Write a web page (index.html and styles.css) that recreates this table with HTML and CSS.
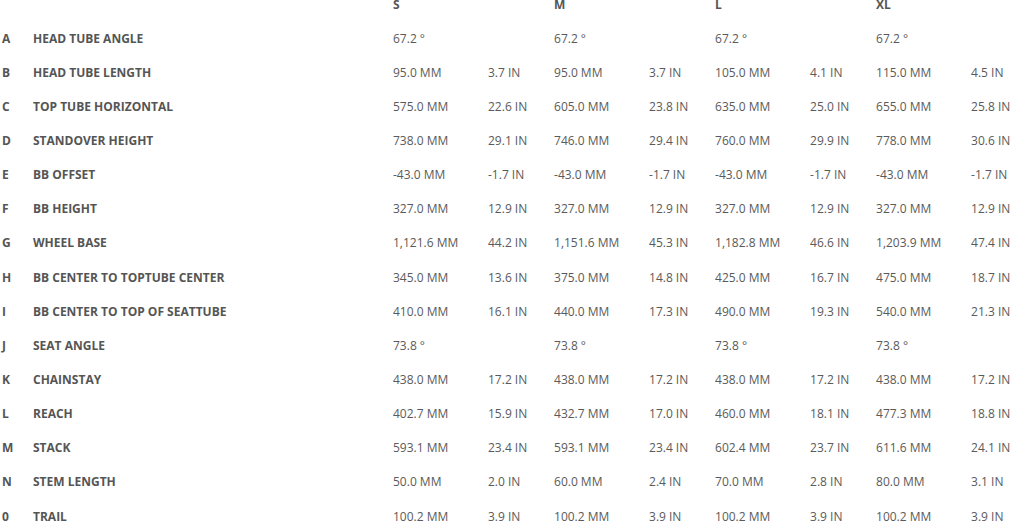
FILE: index.html
```html
<!DOCTYPE html>
<html>
<head>
<meta charset="utf-8">
<link rel="stylesheet" href="styles.css">
</head>
<body>
<table class="geo">
<colgroup>
<col class="c-letter"><col class="c-name">
<col class="c-mm"><col class="c-in">
<col class="c-mm"><col class="c-in">
<col class="c-mm"><col class="c-in">
<col class="c-mm"><col class="c-in">
</colgroup>
<thead>
<tr class="head"><th></th><th></th><th colspan="2">S</th><th colspan="2">M</th><th colspan="2">L</th><th colspan="2">XL</th></tr>
</thead>
<tbody>
<tr><th>A</th><th>HEAD TUBE ANGLE</th><td>67.2 °</td><td></td><td>67.2 °</td><td></td><td>67.2 °</td><td></td><td>67.2 °</td><td></td></tr>
<tr><th>B</th><th>HEAD TUBE LENGTH</th><td>95.0 MM</td><td>3.7 IN</td><td>95.0 MM</td><td>3.7 IN</td><td>105.0 MM</td><td>4.1 IN</td><td>115.0 MM</td><td>4.5 IN</td></tr>
<tr><th>C</th><th>TOP TUBE HORIZONTAL</th><td>575.0 MM</td><td>22.6 IN</td><td>605.0 MM</td><td>23.8 IN</td><td>635.0 MM</td><td>25.0 IN</td><td>655.0 MM</td><td>25.8 IN</td></tr>
<tr><th>D</th><th>STANDOVER HEIGHT</th><td>738.0 MM</td><td>29.1 IN</td><td>746.0 MM</td><td>29.4 IN</td><td>760.0 MM</td><td>29.9 IN</td><td>778.0 MM</td><td>30.6 IN</td></tr>
<tr><th>E</th><th>BB OFFSET</th><td>-43.0 MM</td><td>-1.7 IN</td><td>-43.0 MM</td><td>-1.7 IN</td><td>-43.0 MM</td><td>-1.7 IN</td><td>-43.0 MM</td><td>-1.7 IN</td></tr>
<tr><th>F</th><th>BB HEIGHT</th><td>327.0 MM</td><td>12.9 IN</td><td>327.0 MM</td><td>12.9 IN</td><td>327.0 MM</td><td>12.9 IN</td><td>327.0 MM</td><td>12.9 IN</td></tr>
<tr><th>G</th><th>WHEEL BASE</th><td>1,121.6 MM</td><td>44.2 IN</td><td>1,151.6 MM</td><td>45.3 IN</td><td>1,182.8 MM</td><td>46.6 IN</td><td>1,203.9 MM</td><td>47.4 IN</td></tr>
<tr><th>H</th><th>BB CENTER TO TOPTUBE CENTER</th><td>345.0 MM</td><td>13.6 IN</td><td>375.0 MM</td><td>14.8 IN</td><td>425.0 MM</td><td>16.7 IN</td><td>475.0 MM</td><td>18.7 IN</td></tr>
<tr><th>I</th><th>BB CENTER TO TOP OF SEATTUBE</th><td>410.0 MM</td><td>16.1 IN</td><td>440.0 MM</td><td>17.3 IN</td><td>490.0 MM</td><td>19.3 IN</td><td>540.0 MM</td><td>21.3 IN</td></tr>
<tr><th>J</th><th>SEAT ANGLE</th><td>73.8 °</td><td></td><td>73.8 °</td><td></td><td>73.8 °</td><td></td><td>73.8 °</td><td></td></tr>
<tr><th>K</th><th>CHAINSTAY</th><td>438.0 MM</td><td>17.2 IN</td><td>438.0 MM</td><td>17.2 IN</td><td>438.0 MM</td><td>17.2 IN</td><td>438.0 MM</td><td>17.2 IN</td></tr>
<tr><th>L</th><th>REACH</th><td>402.7 MM</td><td>15.9 IN</td><td>432.7 MM</td><td>17.0 IN</td><td>460.0 MM</td><td>18.1 IN</td><td>477.3 MM</td><td>18.8 IN</td></tr>
<tr><th>M</th><th>STACK</th><td>593.1 MM</td><td>23.4 IN</td><td>593.1 MM</td><td>23.4 IN</td><td>602.4 MM</td><td>23.7 IN</td><td>611.6 MM</td><td>24.1 IN</td></tr>
<tr><th>N</th><th>STEM LENGTH</th><td>50.0 MM</td><td>2.0 IN</td><td>60.0 MM</td><td>2.4 IN</td><td>70.0 MM</td><td>2.8 IN</td><td>80.0 MM</td><td>3.1 IN</td></tr>
<tr><th>0</th><th>TRAIL</th><td>100.2 MM</td><td>3.9 IN</td><td>100.2 MM</td><td>3.9 IN</td><td>100.2 MM</td><td>3.9 IN</td><td>100.2 MM</td><td>3.9 IN</td></tr>
</tbody>
</table>
</body>
</html>
```
FILE: styles.css
```css
html, body {
  margin: 0;
  padding: 0;
  background: #fff;
}
body {
  font-family: "Open Sans", "Liberation Sans", sans-serif;
  font-size: 12px;
  color: #595959;
}
.geo {
  border-collapse: collapse;
  table-layout: fixed;
  width: 1032px;
  margin-left: 2px;
}
.c-letter { width: 31px; }
.c-name { width: 360px; }
.c-mm { width: 95px; }
.c-in { width: 66px; }
.geo th, .geo td {
  padding: 0;
  text-align: left;
  white-space: nowrap;
  height: 34.15px;
  line-height: 17px;
  vertical-align: middle;
}
.geo th {
  font-weight: 700;
  color: #555;
}
.geo td {
  font-weight: 400;
  color: #5a5a5a;
}
.head th {
  height: 21px;
  line-height: 10px;
  vertical-align: top;
}
```
